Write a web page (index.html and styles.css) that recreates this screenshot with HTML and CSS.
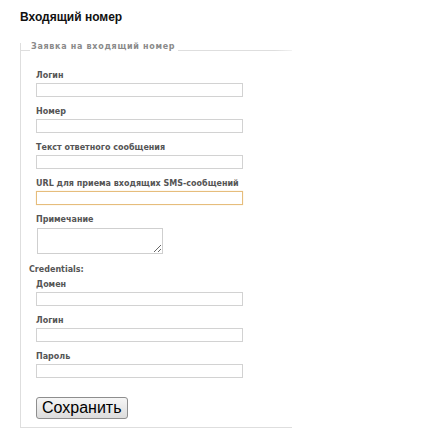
FILE: index.html
```html
<!DOCTYPE html>
<html lang="ru">
<head>
<meta charset="utf-8">
<title>Входящий номер</title>
<link rel="stylesheet" href="styles.css">
</head>
<body>
<div class="page">
  <h1 class="title">Входящий номер</h1>
  <form class="box">
    <div class="box-head">
      <span class="line line-short"></span>
      <span class="legend">Заявка на входящий номер</span>
      <span class="line line-long"></span>
    </div>
    <div class="fields">
      <div class="field">
        <label class="label">Логин</label>
        <input class="input" type="text">
      </div>
      <div class="field">
        <label class="label">Номер</label>
        <input class="input" type="text">
      </div>
      <div class="field">
        <label class="label">Текст ответного сообщения</label>
        <input class="input" type="text">
      </div>
      <div class="field">
        <label class="label">URL для приема входящих SMS-сообщений</label>
        <input class="input input-focus" type="text">
      </div>
      <div class="field">
        <label class="label">Примечание</label>
        <textarea class="textarea"></textarea>
      </div>
    </div>
    <div class="group-title">Credentials:</div>
    <div class="fields fields-cred">
      <div class="field field-first">
        <label class="label">Домен</label>
        <input class="input" type="text">
      </div>
      <div class="field">
        <label class="label">Логин</label>
        <input class="input" type="text">
      </div>
      <div class="field">
        <label class="label">Пароль</label>
        <input class="input" type="password">
      </div>
    </div>
    <div class="actions">
      <button class="button" type="button">Сохранить</button>
    </div>
  </form>
</div>
</body>
</html>
```
FILE: styles.css
```css
html, body {
  margin: 0;
  padding: 0;
  background: #ffffff;
}

.page {
  padding: 10px 0 0 20px;
  font-family: "DejaVu Sans", Verdana, sans-serif;
}

.title {
  margin: 0;
  font-family: "Liberation Sans", Arial, sans-serif;
  font-size: 12px;
  line-height: 14px;
  font-weight: bold;
  color: #111111;
}

.box {
  margin-top: 19px;
  width: 271px;
  border-left: 1px solid #dedede;
  border-bottom: 1px solid #dedede;
  padding-bottom: 8px;
}

.box-head {
  display: flex;
  align-items: flex-end;
  height: 8px;
  margin-left: -1px;
}

.line {
  display: block;
  height: 1px;
  background: #dedede;
  margin-bottom: 0;
}

.line-short {
  width: 10px;
}

.line-long {
  flex: 1;
  margin-left: 3px;
  background: linear-gradient(to right, #dedede 85%, #f2f2f2);
}

.legend {
  font-size: 8px;
  line-height: 8px;
  font-weight: bold;
  color: #8a8a8a;
  padding-left: 1px;
  letter-spacing: 0.7px;
}

.fields {
  display: flex;
  flex-direction: column;
  padding-left: 15px;
  padding-top: 20px;
}

.fields-cred {
  padding-top: 5px;
}

.field {
  display: flex;
  flex-direction: column;
  align-items: flex-start;
  margin-bottom: 10px;
}

.label {
  font-size: 8px;
  line-height: 10px;
  font-weight: bold;
  color: #555555;
  margin-bottom: 2px;
}

.input {
  box-sizing: border-box;
  width: 207px;
  height: 14px;
  margin: 0;
  padding: 0 2px;
  border: 1px solid #d2d2d2;
  background: #ffffff;
  outline: none;
}

.input-focus {
  border-color: #e6bd7c;
  box-shadow: 0 0 1px #f3dcb4;
}

.textarea {
  box-sizing: border-box;
  width: 126px;
  height: 26px;
  margin: 1px 0 0 1px;
  padding: 1px;
  border: 1px solid #cfcfcf;
  resize: both;
  outline: none;
  display: block;
}

.group-title {
  padding-left: 8px;
  margin-top: 1px;
  font-size: 8px;
  line-height: 10px;
  font-weight: bold;
  color: #555555;
}

.actions {
  padding-left: 15px;
  padding-top: 9px;
}

.button {
  box-sizing: border-box;
  height: 22px;
  padding: 0 5px;
  font-family: "Liberation Sans", Arial, sans-serif;
  font-size: 16px;
  line-height: 18px;
  color: #000000;
  border: 1px solid #8e8e8e;
  border-radius: 3px;
  background: linear-gradient(to bottom, #f6f6f6, #dcdcdc);
}
```
